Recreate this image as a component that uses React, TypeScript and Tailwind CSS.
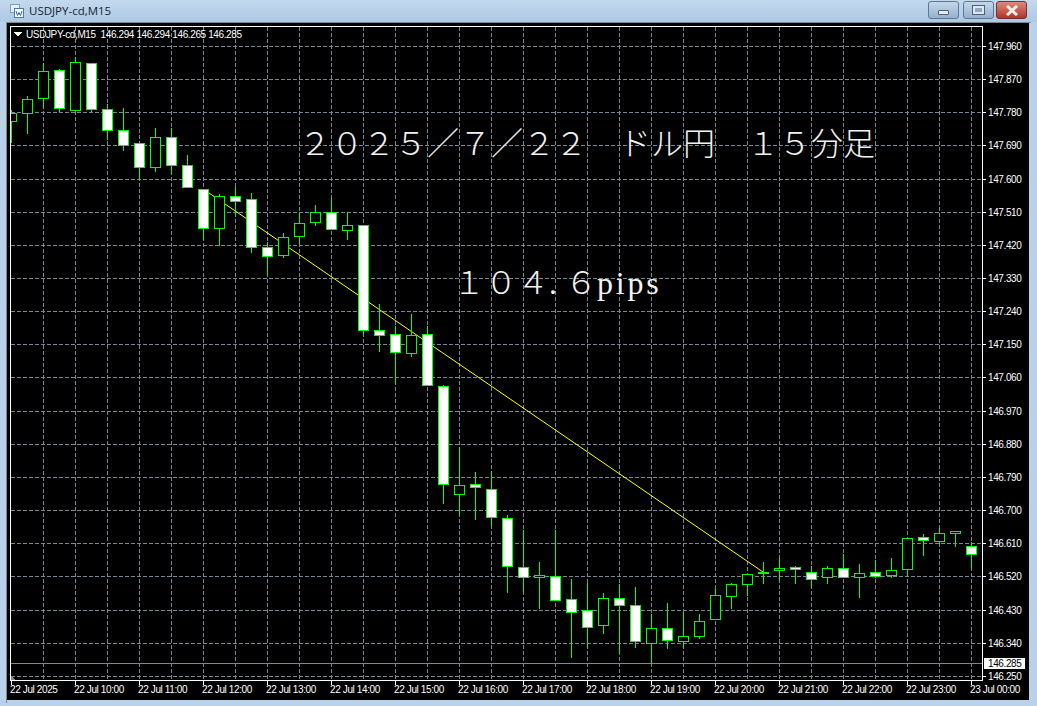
const PRICES = ['147.960', '147.870', '147.780', '147.690', '147.600', '147.510', '147.420', '147.330', '147.240', '147.150', '147.060', '146.970', '146.880', '146.790', '146.700', '146.610', '146.520', '146.430', '146.340', '146.250'];
const PRICE_Y = [46, 79, 112, 145, 179, 212, 245, 278, 311, 344, 377, 411, 444, 477, 510, 543, 576, 610, 643, 676];
const TIMES = ['22 Jul 2025', '22 Jul 10:00', '22 Jul 11:00', '22 Jul 12:00', '22 Jul 13:00', '22 Jul 14:00', '22 Jul 15:00', '22 Jul 16:00', '22 Jul 17:00', '22 Jul 18:00', '22 Jul 19:00', '22 Jul 20:00', '22 Jul 21:00', '22 Jul 22:00', '22 Jul 23:00', '23 Jul 00:00'];

// wick top, wick bottom, body top, body bottom, 1 = white body. x = 11 + 16 * index
const CANDLES: number[][] = [
  [110, 142, 113, 121, 0], [96, 133, 99, 113, 0], [63, 108, 71, 98, 0], [69, 111, 70, 108, 1],
  [57, 110, 62, 110, 0], [63, 111, 63, 109, 1], [104, 139, 109, 130, 1], [108, 150, 130, 145, 1],
  [143, 179, 143, 167, 1], [128, 171, 137, 167, 0], [128, 173, 137, 165, 1], [155, 187, 165, 187, 1],
  [189, 239, 189, 228, 1], [194, 245, 196, 228, 0], [187, 214, 196, 201, 1], [193, 252, 199, 247, 1],
  [242, 274, 247, 256, 1], [233, 257, 237, 255, 0], [213, 243, 223, 236, 0], [205, 225, 212, 222, 0],
  [198, 229, 212, 229, 1], [212, 239, 225, 230, 0], [225, 334, 225, 330, 1], [304, 351, 330, 335, 1],
  [326, 383, 334, 352, 1], [314, 356, 335, 353, 0], [326, 385, 334, 385, 1], [385, 503, 386, 484, 1],
  [447, 514, 485, 494, 0], [472, 519, 484, 487, 1], [471, 525, 489, 517, 1], [515, 592, 518, 566, 1],
  [530, 592, 567, 577, 1], [562, 608, 575, 577, 0], [530, 600, 576, 600, 1], [579, 657, 599, 612, 1],
  [583, 647, 610, 627, 1], [593, 633, 598, 625, 0], [584, 652, 598, 605, 1], [587, 647, 605, 641, 1],
  [614, 663, 628, 643, 0], [603, 648, 628, 640, 1], [612, 647, 636, 641, 0], [614, 638, 621, 636, 0],
  [588, 619, 595, 619, 0], [583, 608, 584, 596, 0], [574, 595, 574, 584, 0], [562, 583, 572, 573, 0],
  [558, 580, 568, 570, 0], [566, 583, 567, 569, 1], [566, 587, 572, 579, 1], [566, 583, 568, 577, 0],
  [554, 577, 568, 577, 1], [564, 597, 573, 577, 0], [560, 577, 572, 576, 1], [558, 577, 570, 575, 0],
  [538, 576, 538, 569, 0], [534, 555, 537, 540, 1], [528, 543, 533, 541, 0], [531, 546, 531, 533, 0],
  [542, 568, 546, 554, 1],
];

const VERTICALS = Array.from({ length: 30 }, (_, i) => 43 + 32 * i);
const TIME_TICKS = TIMES.map((_, i) => 11 + 64 * i);

function ChartCanvas() {
  return (
    <svg viewBox="7 23 1021 677" shapeRendering="crispEdges" className="block w-[1021px] h-[677px]">
      <defs>
        <clipPath id="plot">
          <rect x="11" y="27" width="971" height="654" />
        </clipPath>
      </defs>
      {/* frame */}
      <rect x="10.5" y="26.5" width="972" height="654" fill="none" stroke="#fff" />
      {/* grid */}
      {PRICE_Y.map((y) => (
        <line key={y} x1="11" x2="982" y1={y + 0.5} y2={y + 0.5} stroke="#778899" strokeDasharray="4 2" />
      ))}
      {VERTICALS.map((x) => (
        <line key={x} x1={x + 0.5} x2={x + 0.5} y1="27" y2="680" stroke="#778899" strokeDasharray="4 2" />
      ))}
      {/* bid line */}
      <line x1="11" x2="982" y1="663.5" y2="663.5" stroke="#778899" />
      {/* ticks */}
      {PRICE_Y.map((y) => (
        <line key={y} x1="983" x2="986" y1={y + 0.5} y2={y + 0.5} stroke="#fff" />
      ))}
      {TIME_TICKS.map((x) => (
        <line key={x} x1={x + 0.5} x2={x + 0.5} y1="681" y2="685" stroke="#fff" />
      ))}
      {/* trend line */}
      <line x1="209" y1="193" x2="763" y2="572" stroke="#ffff00" shapeRendering="auto" />
      {/* candles */}
      <g clipPath="url(#plot)">
        {CANDLES.map(([wt, wb, bt, bb, white], i) => {
          const x = 11 + 16 * i;
          return (
            <g key={i}>
              <line x1={x + 0.5} x2={x + 0.5} y1={wt} y2={wb + 1} stroke="#00ff00" />
              <rect x={x - 4.5} y={bt + 0.5} width="10" height={bb - bt} fill={white ? '#fff' : '#000'} stroke="#00ff00" />
            </g>
          );
        })}
      </g>
      {/* scale fix marker */}
      <path d="M11 676 L15 680 L11 680 Z" fill="#778899" />
      {/* header triangle */}
      <path d="M14 32 L22 32 L18 37 Z" fill="#fff" />
    </svg>
  );
}

function WindowButton({ children, className }: { children: React.ReactNode; className: string }) {
  return (
    <div className={`flex items-center justify-center h-[18px] w-[31px] rounded-[3px] border ${className}`}>
      {children}
    </div>
  );
}

export default function App() {
  return (
    <div className="w-[1037px] h-[706px] overflow-hidden flex flex-col bg-[#b9d1ea] font-['Liberation_Sans',sans-serif]">
      {/* title bar */}
      <div className="h-[22px] shrink-0 flex items-center bg-gradient-to-b from-[#c3d9ed] to-[#aec9e4] pl-[10px] pr-[10px]">
        <svg width="14" height="14" viewBox="0 0 14 14" className="mr-[5px]">
          <rect x="0.5" y="0.5" width="9" height="8" fill="#e8f0fa" stroke="#7f9dc0" />
          <rect x="4.5" y="4.5" width="9" height="9" fill="#fff" stroke="#4d79b0" />
          <path d="M6 7 L7.5 11.5 L9 8.5 L10.5 11.5 L12 7" fill="none" stroke="#2f5fa0" />
        </svg>
        <span className="text-[11.5px] leading-none text-[#16222f] font-['Open_Sans',sans-serif] -mt-[1px]">USDJPY-cd,M15</span>
        <div className="ml-auto flex items-start self-start pt-[1px]">
          <WindowButton className="border-[#62768c] bg-gradient-to-b from-[#c4d7ea] to-[#94b1cf]">
            <span className="block w-[11px] h-[5px] mt-[4px] bg-[#e4eaf0] border border-[#4d6075] rounded-[1px]" />
          </WindowButton>
          <WindowButton className="ml-[4px] border-[#62768c] bg-gradient-to-b from-[#c4d7ea] to-[#94b1cf]">
            <span className="block w-[11px] h-[8px] border-[2px] border-[#dfe6ee] outline outline-1 outline-[#4d6075] bg-[#8fa9c4]" />
          </WindowButton>
          <WindowButton className="ml-[2px] border-[#70343a] bg-gradient-to-b from-[#d98a7e] to-[#b13325]">
            <svg width="14" height="11" viewBox="0 0 14 11">
              <path d="M2 1 L12 10 M12 1 L2 10" stroke="#f3eeee" strokeWidth="3" />
            </svg>
          </WindowButton>
        </div>
      </div>

      {/* chart window */}
      <div className="flex-1 mx-[6px] mb-[3px] border-l border-t border-[#7d8691] w-[1025px]">
        <div className="relative w-[1022px] h-[677px] bg-black text-white text-[10px] leading-[12px] tracking-[-0.38px]">
          <ChartCanvas />
          <div className="absolute left-[19px] top-[6px] whitespace-pre">USDJPY-cd,M15  146.294 146.294 146.265 146.285</div>

          <div className="absolute left-[292px] top-[102px] whitespace-pre text-[32px] leading-[38px] tracking-normal font-['Liberation_Serif','Noto_Sans_CJK_JP',serif] font-light text-[#f2f2f2]">
            ２０２５／７／２２　ドル円　１５分足
          </div>
          <div className="absolute left-[446px] top-[241px] whitespace-pre text-[32px] leading-[38px] tracking-normal font-['Liberation_Serif','Noto_Sans_CJK_JP',serif] font-light text-[#f2f2f2]">
            １０４<span className="inline-block w-[16px]">.</span>６<span className="tracking-[2.8px]">pips</span>
          </div>

          {PRICES.map((p, i) => (
            <div key={p} className="absolute left-[981px]" style={{ top: PRICE_Y[i] - 23 - 5 }}>
              {p}
            </div>
          ))}
          <div className="absolute left-[977px] top-[635px] w-[41px] h-[11px] bg-white text-black pl-[4px] leading-[11px]">146.285</div>

          {TIMES.map((t, i) => (
            <div key={t} className="absolute top-[661px] whitespace-pre" style={{ left: 3 + 64 * i }}>
              {t}
            </div>
          ))}
        </div>
      </div>
    </div>
  );
}
